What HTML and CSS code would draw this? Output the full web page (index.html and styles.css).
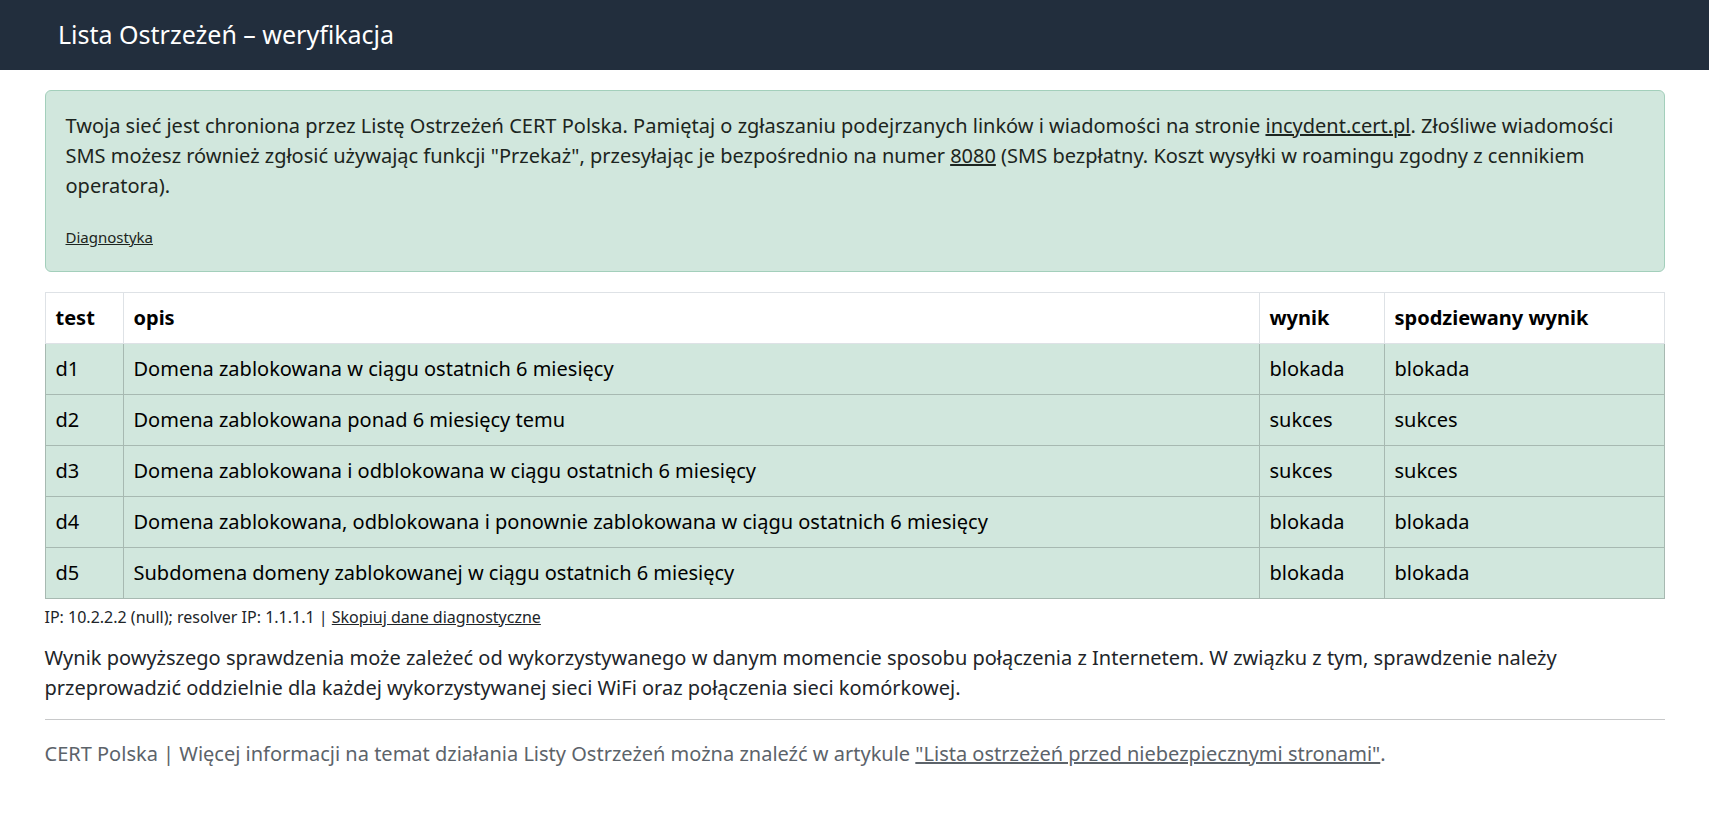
FILE: index.html
```html
<!DOCTYPE html>
<html lang="pl">
<head>
    <meta charset="UTF-8">
    <meta name="viewport" content="width=device-width, initial-scale=1.0">
    <title>Lista Ostrzeżeń – weryfikacja</title>
    <link rel="stylesheet" href="styles.css">
</head>
<body>
    <!-- Pasek tytułu -->
    <nav class="navbar">
        <span class="brand">Lista Ostrzeżeń – weryfikacja</span>
    </nav>

    <main class="container">
        <!-- Komunikat o ochronie -->
        <div class="alert">
            <p>Twoja sieć jest chroniona przez Listę Ostrzeżeń CERT Polska. Pamiętaj o zgłaszaniu podejrzanych linków i wiadomości na stronie <a href="#">incydent.cert.pl</a>. Złośliwe wiadomości SMS możesz również zgłosić używając funkcji "Przekaż", przesyłając je bezpośrednio na numer <a href="#">8080</a> (SMS bezpłatny. Koszt wysyłki w roamingu zgodny z cennikiem operatora).</p>
            <div><small class="diag-link"><a href="#">Diagnostyka</a></small></div>
        </div>

        <!-- Wyniki testów -->
        <table class="results">
            <colgroup>
                <col class="col-test">
                <col>
                <col class="col-wynik">
                <col class="col-expected">
            </colgroup>
            <thead>
                <tr>
                    <th>test</th>
                    <th>opis</th>
                    <th>wynik</th>
                    <th>spodziewany wynik</th>
                </tr>
            </thead>
            <tbody>
                <tr>
                    <td>d1</td>
                    <td>Domena zablokowana w ciągu ostatnich 6 miesięcy</td>
                    <td>blokada</td>
                    <td>blokada</td>
                </tr>
                <tr>
                    <td>d2</td>
                    <td>Domena zablokowana ponad 6 miesięcy temu</td>
                    <td>sukces</td>
                    <td>sukces</td>
                </tr>
                <tr>
                    <td>d3</td>
                    <td>Domena zablokowana i odblokowana w ciągu ostatnich 6 miesięcy</td>
                    <td>sukces</td>
                    <td>sukces</td>
                </tr>
                <tr>
                    <td>d4</td>
                    <td>Domena zablokowana, odblokowana i ponownie zablokowana w ciągu ostatnich 6 miesięcy</td>
                    <td>blokada</td>
                    <td>blokada</td>
                </tr>
                <tr>
                    <td>d5</td>
                    <td>Subdomena domeny zablokowanej w ciągu ostatnich 6 miesięcy</td>
                    <td>blokada</td>
                    <td>blokada</td>
                </tr>
            </tbody>
        </table>

        <div class="diag">IP: 10.2.2.2 (null); resolver IP: 1.1.1.1 | <a href="#">Skopiuj dane diagnostyczne</a></div>

        <p class="note">Wynik powyższego sprawdzenia może zależeć od wykorzystywanego w danym momencie sposobu połączenia z Internetem. W związku z tym, sprawdzenie należy przeprowadzić oddzielnie dla każdej wykorzystywanej sieci WiFi oraz połączenia sieci komórkowej.</p>

        <hr>

        <!-- Stopka -->
        <footer class="footer">
            CERT Polska | Więcej informacji na temat działania Listy Ostrzeżeń można znaleźć w artykule <a href="#">"Lista ostrzeżeń przed niebezpiecznymi stronami"</a>.
        </footer>
    </main>
</body>
</html>
```

FILE: styles.css
```css
body {
    margin: 0;
    font-family: "Noto Sans", "Open Sans", sans-serif;
    font-size: 20px;
    line-height: 1.5;
    color: #212529;
    background: #fff;
}
a {
    color: inherit;
}
.navbar {
    background-color: #222e3d;
    height: 70px;
    display: flex;
    align-items: center;
    padding-left: 58px;
}
.brand {
    color: #fff;
    font-size: 25px;
}
.container {
    max-width: 1620px;
    margin: 0 auto;
}
.alert {
    margin-top: 20px;
    margin-bottom: 20px;
    padding: 20px;
    background-color: #d1e7dd;
    border: 1px solid #a3cfbb;
    border-radius: 6px;
    color: #1c2520;
}
.alert p {
    margin: 0 0 20px;
}
.diag-link {
    font-size: 15px;
}
.results {
    width: 100%;
    border-collapse: collapse;
    margin-bottom: 6px;
}
.results th,
.results td {
    padding: 10px;
    text-align: left;
    border: 1px solid #a7b9b1;
}
.results th {
    background: #fff;
    border-color: #dee2e6;
    font-weight: 700;
    color: #000;
}
.results td {
    background-color: #d1e7dd;
    color: #000;
}
.col-test {
    width: 78px;
}
.col-wynik {
    width: 125px;
}
.col-expected {
    width: 280px;
}
.diag {
    font-size: 16px;
    margin-bottom: 14px;
}
.note {
    margin: 0 0 16px;
}
hr {
    border: 0;
    border-top: 1px solid #c8c9ca;
    margin: 0 0 19px;
}
.footer {
    color: #5c636a;
}
```
